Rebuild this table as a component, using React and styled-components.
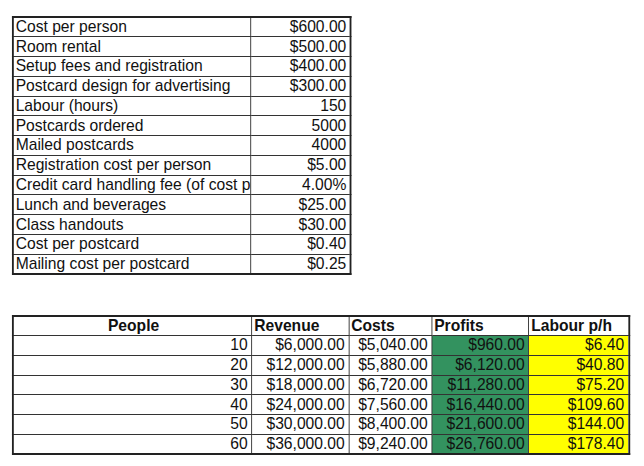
import React from 'react';
import styled, { createGlobalStyle } from 'styled-components';

const GlobalStyle = createGlobalStyle`
  html, body {
    margin: 0;
    padding: 0;
    background: #ffffff;
  }
`;

// the screenshot is squeezed sideways, so the sheet is drawn wider and scaled back
const SQUEEZE = 0.92;
const w = (px) => px / SQUEEZE;

const inputs = [
    ['Cost per person', '$600.00'],
    ['Room rental', '$500.00'],
    ['Setup fees and registration', '$400.00'],
    ['Postcard design for advertising', '$300.00'],
    ['Labour (hours)', '150'],
    ['Postcards ordered', '5000'],
    ['Mailed postcards', '4000'],
    ['Registration cost per person', '$5.00'],
    ['Credit card handling fee (of cost per person)', '4.00%'],
    ['Lunch and beverages', '$25.00'],
    ['Class handouts', '$30.00'],
    ['Cost per postcard', '$0.40'],
    ['Mailing cost per postcard', '$0.25'],
];

const results = [
    ['10', '$6,000.00', '$5,040.00', '$960.00', '$6.40'],
    ['20', '$12,000.00', '$5,880.00', '$6,120.00', '$40.80'],
    ['30', '$18,000.00', '$6,720.00', '$11,280.00', '$75.20'],
    ['40', '$24,000.00', '$7,560.00', '$16,440.00', '$109.60'],
    ['50', '$30,000.00', '$8,400.00', '$21,600.00', '$144.00'],
    ['60', '$36,000.00', '$9,240.00', '$26,760.00', '$178.40'],
];

const fills = { profit: '#33925f', labour: '#ffff00' };

const Sheet = styled.div`
    display: flex;
    flex-direction: column;
    align-items: flex-start;
    gap: 40px;
    padding: 16px 0 0 ${w(12)}px;
    font-family: 'Liberation Sans', Arial, sans-serif;
    font-size: 17px;
    color: #111;
    transform: scale(${SQUEEZE}, 1);
    transform-origin: 0 0;
`;

const Grid = styled.table`
    border-collapse: collapse;
    table-layout: fixed;
    width: ${(p) => p.$width}px;
    border: 2px solid #222;
`;

const Row = styled.tr`
    height: ${(p) => p.$height}px;
`;

const Cell = styled.td`
    border: 1px solid #333;
    padding: 0 ${(p) => (p.$align === 'right' ? '4px' : '0')} 0 ${(p) => (p.$align === 'right' ? '0' : '2px')};
    text-align: ${(p) => p.$align || 'left'};
    background: ${(p) => (p.$fill ? fills[p.$fill] : 'transparent')};
    white-space: nowrap;
    overflow: hidden;
    line-height: 18px;
    vertical-align: middle;
`;

const Head = styled(Cell).attrs({ as: 'th' })`
    font-weight: bold;
    text-align: ${(p) => p.$align || 'left'};
`;

const InputTable = () => (
    <Grid $width={w(338)}>
        <colgroup>
            <col style={{ width: w(238) }} />
            <col style={{ width: w(100) }} />
        </colgroup>
        <tbody>
            {inputs.map(([label, value]) => (
                <Row key={label} $height={19.77}>
                    <Cell>{label}</Cell>
                    <Cell $align="right">{value}</Cell>
                </Row>
            ))}
        </tbody>
    </Grid>
);

const ResultTable = () => (
    <Grid $width={w(616)}>
        <colgroup>
            <col style={{ width: w(239) }} />
            <col style={{ width: w(97) }} />
            <col style={{ width: w(83) }} />
            <col style={{ width: w(97) }} />
            <col style={{ width: w(100) }} />
        </colgroup>
        <thead>
            <Row $height={19.7}>
                <Head $align="center">People</Head>
                <Head>Revenue</Head>
                <Head>Costs</Head>
                <Head>Profits</Head>
                <Head>Labour p/h</Head>
            </Row>
        </thead>
        <tbody>
            {results.map(([people, revenue, costs, profit, labour]) => (
                <Row key={people} $height={19.7}>
                    <Cell $align="right">{people}</Cell>
                    <Cell $align="right">{revenue}</Cell>
                    <Cell $align="right">{costs}</Cell>
                    <Cell $align="right" $fill="profit">{profit}</Cell>
                    <Cell $align="right" $fill="labour">{labour}</Cell>
                </Row>
            ))}
        </tbody>
    </Grid>
);

export default function App() {
    return (
        <>
            <GlobalStyle />
            <Sheet>
                <InputTable />
                <ResultTable />
            </Sheet>
        </>
    );
}
